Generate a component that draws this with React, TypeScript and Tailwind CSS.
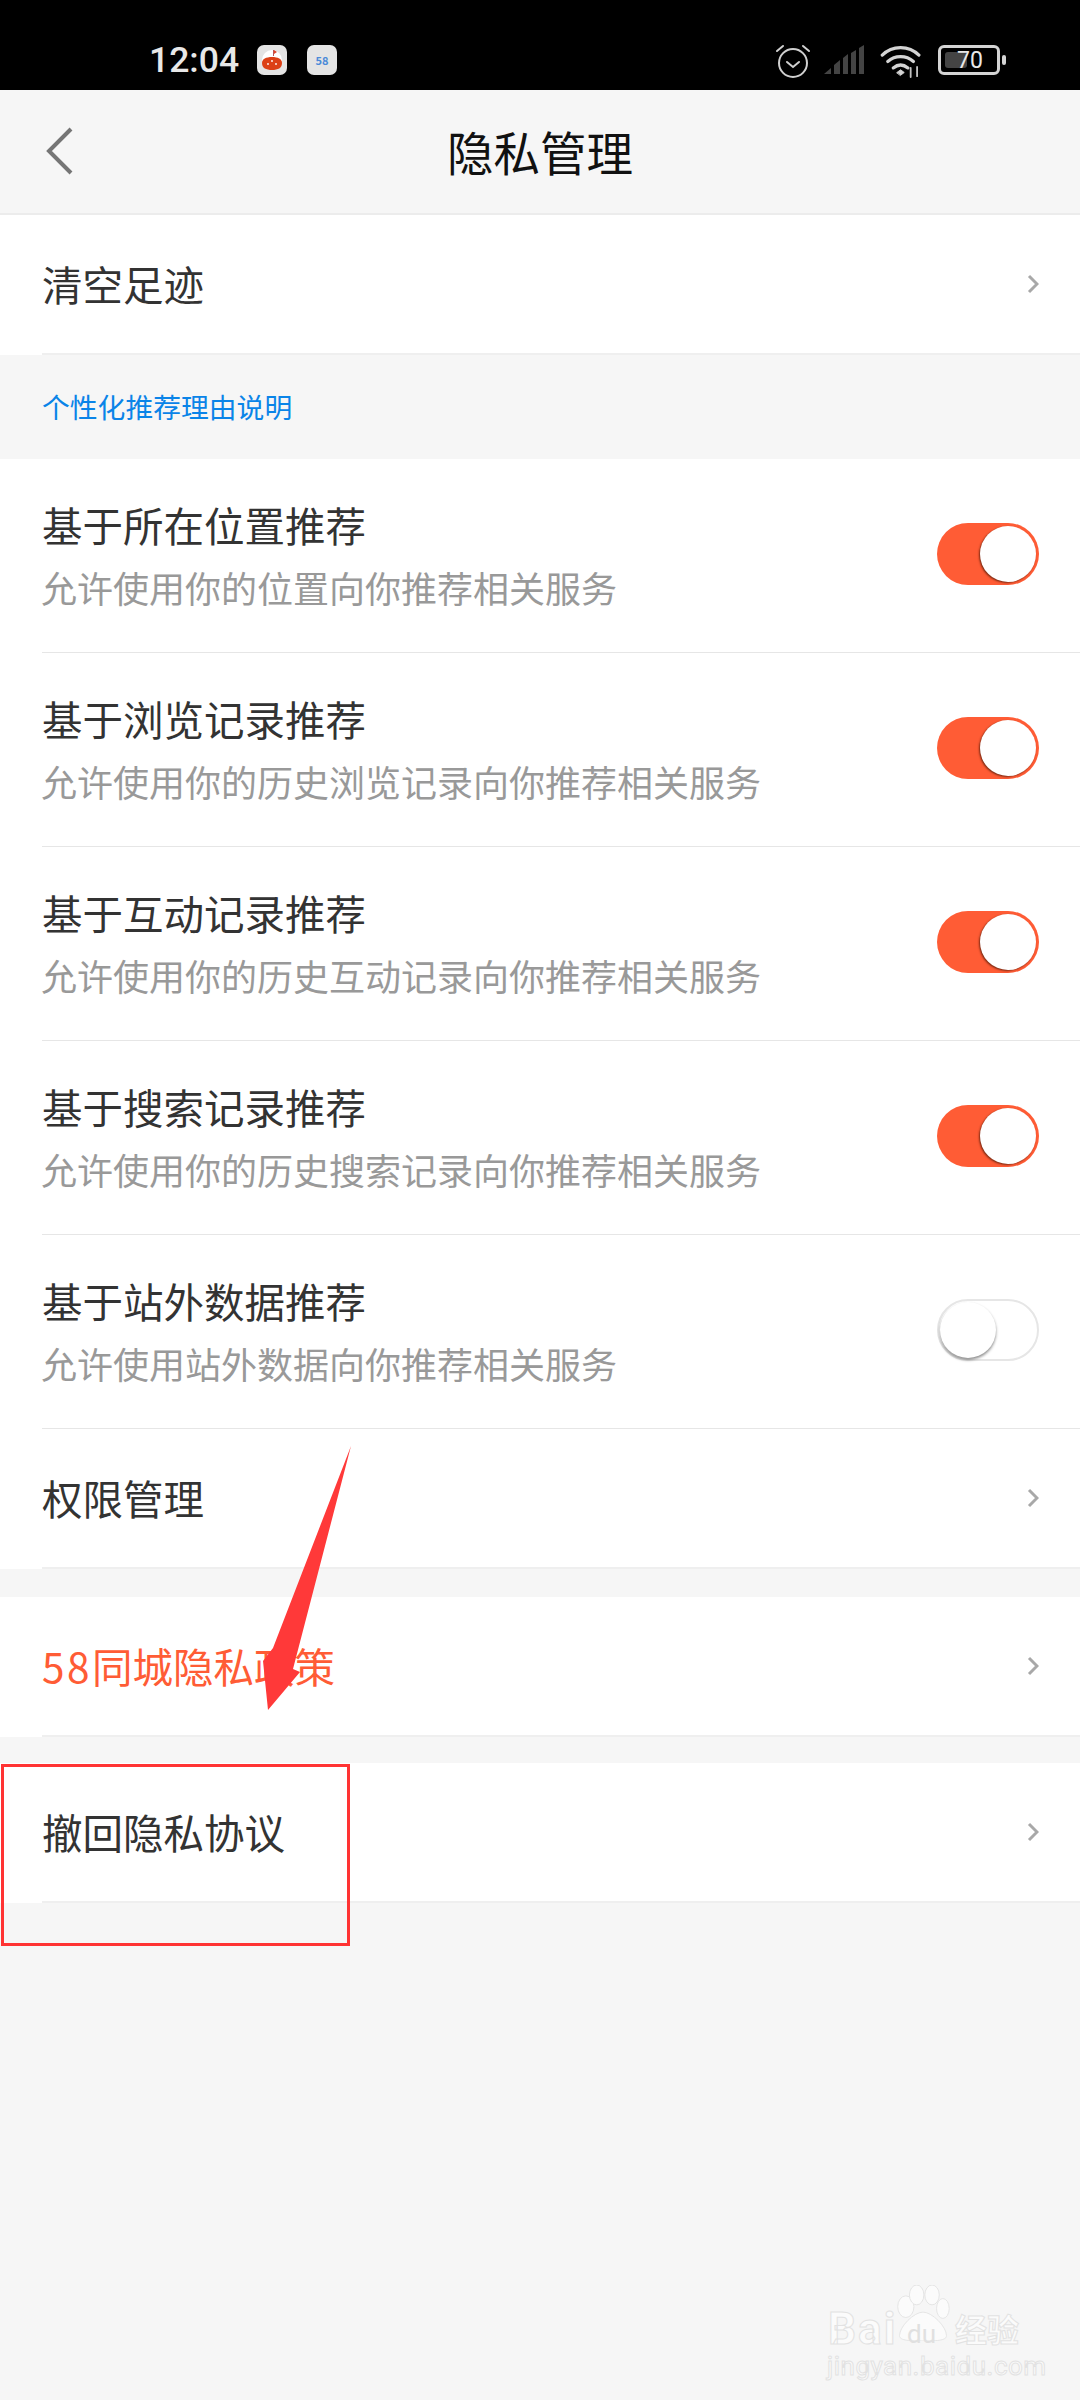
const FONT = { fontFamily: '"Noto Sans CJK SC", "Noto Sans", sans-serif' }

type ToggleRowProps = {
  title: string
  desc: string
  on?: boolean
}

const toggleRows: ToggleRowProps[] = [
  { title: "基于所在位置推荐", desc: "允许使用你的位置向你推荐相关服务", on: true },
  { title: "基于浏览记录推荐", desc: "允许使用你的历史浏览记录向你推荐相关服务", on: true },
  { title: "基于互动记录推荐", desc: "允许使用你的历史互动记录向你推荐相关服务", on: true },
  { title: "基于搜索记录推荐", desc: "允许使用你的历史搜索记录向你推荐相关服务", on: true },
  { title: "基于站外数据推荐", desc: "允许使用站外数据向你推荐相关服务" },
]

function StatusBar() {
  return (
    <div className="flex h-[90px] items-start justify-between bg-black pt-[45px] pl-[149px] pr-[74px]">
      <div className="flex items-center">
        <span
          className="w-[86px] text-[35.5px] leading-[30px] font-medium text-[#e8e8e8]"
          style={{ fontFamily: "Roboto, sans-serif" }}
        >
          12:04
        </span>
        <div className="ml-[22px] flex h-[30px] w-[30px] items-center justify-center rounded-[7px] bg-[#e4e4e4]">
          <svg width="20" height="22" viewBox="0 0 20 22">
            <circle cx="10" cy="11" r="10" fill="#fff" />
            <path d="M0 14c0-4 4-6 10-6s10 2 10 6c0 5-4 7-10 7S0 19 0 14z" fill="#dc4016" />
            <path d="M11 1h1v6h-1z" fill="#b55" />
            <path d="M12 1l3 2-3 2z" fill="#e0452a" />
            <circle cx="6" cy="15" r="0.9" fill="#fff" />
            <circle cx="14" cy="15" r="0.9" fill="#fff" />
            <circle cx="10" cy="12" r="0.9" fill="#fff" />
          </svg>
        </div>
        <div className="ml-[20px] flex h-[30px] w-[30px] items-center justify-center rounded-[7px] bg-[#e4e4e4] text-[11px] leading-none font-bold text-[#4a8ad8]">
          58
        </div>
      </div>
      <div className="flex items-start">
        <svg width="36" height="36" viewBox="0 0 36 36" fill="none" stroke="#d0d0d0" strokeWidth="2" strokeLinecap="round" className="mt-[-2px]">
          <circle cx="18" cy="20" r="14" />
          <path d="M12 19l6 5 6-5" />
          <path d="M2 8l6-5M34 8l-6-5" />
        </svg>
        <svg width="40" height="29" viewBox="0 0 40 29" fill="#444" className="ml-[13px]">
          <path d="M0 29l7-6v6z" />
          <path d="M10 20l6-5v14h-6z" />
          <path d="M19 13l5-4v20h-5z" />
          <path d="M27 8l5-3v24h-5z" />
          <path d="M35 3l5-3v29h-5z" />
        </svg>
        <svg width="43" height="33" viewBox="0 0 46 36" fill="none" stroke="#d4d4d4" strokeWidth="3.5" strokeLinecap="round" className="ml-[16px]">
          <path d="M2 11c11-11 29-11 40 0" />
          <path d="M8 18c8-7 20-7 28 0" />
          <path d="M14 25c5-4 11-4 16 0" />
          <path d="M18 30l4-3 4 3-4 3z" fill="#d4d4d4" strokeWidth="1" />
          <path d="M33 25v10M40 24v10" stroke="#c0c0c0" strokeWidth="2" />
        </svg>
        <div className="relative ml-[15px] flex h-[30px] w-[62px] items-center rounded-[6px] border-[3px] border-[#d4d4d4] p-[4px]">
          <div className="h-full w-[22px] rounded-[3px] bg-[#444]" />
          <span
            className="absolute inset-0 flex items-center justify-center pl-[2px] text-[23px] leading-none text-[#e8e8e8]"
            style={{ fontFamily: "Roboto, sans-serif" }}
          >
            70
          </span>
        </div>
        <div className="mt-[10px] ml-[2px] h-[10px] w-[4px] rounded-[2px] bg-[#d4d4d4]" />
      </div>
    </div>
  )
}

function NavBar() {
  return (
    <div className="relative flex h-[125px] items-center justify-center border-b-2 border-[#ececec] bg-[#f6f6f6]">
      <svg width="28" height="48" viewBox="0 0 28 48" fill="none" stroke="#757575" strokeWidth="4" className="absolute top-[37px] left-[46px]">
        <path d="M25 2L3 24l22 22" />
      </svg>
      <span className="mt-[-1px] text-[46.5px] leading-none text-[#111]">隐私管理</span>
    </div>
  )
}

function Chevron() {
  return (
    <svg width="12" height="20" viewBox="0 0 12 20" fill="none" stroke="#a8a8a8" strokeWidth="3">
      <path d="M2 2l8 8-8 8" />
    </svg>
  )
}

function LinkRow({ title, prefix, orange, height }: { title: string; prefix?: string; orange?: boolean; height: number }) {
  return (
    <div className="bg-white pl-[42px]" style={{ height }}>
      <div className="flex h-full items-center justify-between border-b-2 border-[#efefef] pr-[41px]">
        <span className={`text-[40.5px] leading-none ${orange ? "text-[#ff5c35]" : "text-[#333]"}`}>
          {prefix && <span className="tracking-[2.5px]">{prefix}</span>}
          {title}
        </span>
        <Chevron />
      </div>
    </div>
  )
}

function Toggle({ on }: { on?: boolean }) {
  return (
    <div
      className={`mb-[3px] flex h-[62px] w-[102px] items-center rounded-full ${
        on
          ? "justify-end bg-[#ff5c35] pr-[3px]"
          : "justify-start border-2 border-[#e6e6e6] bg-white pl-[1px]"
      }`}
    >
      <div
        className={`h-[56px] w-[56px] rounded-full bg-white ${
          on ? "shadow-[-1px_1px_2px_rgba(90,30,10,0.8)]" : "shadow-[0_2px_3px_rgba(0,0,0,0.45)]"
        }`}
      />
    </div>
  )
}

function ToggleRow({ title, desc, on }: ToggleRowProps) {
  return (
    <div className="h-[194px] bg-white pl-[42px]">
      <div className="flex h-full items-center justify-between border-b border-[#e6e6e6] pr-[41px]">
        <div className="flex flex-col pb-[3px]">
          <span className="text-[40.5px] leading-[50px] text-[#333]">{title}</span>
          <span className="mt-[15px] ml-[-1px] text-[36px] leading-[44px] text-[#999]">{desc}</span>
        </div>
        <Toggle on={on} />
      </div>
    </div>
  )
}

function Watermark() {
  return (
    <div className="absolute top-[2285px] left-[828px] h-[92px] w-[194px]">
      <svg width="56" height="56" viewBox="0 0 60 62" fill="#fbfbfb" stroke="#e2e2e2" strokeWidth="1" className="absolute top-0 left-[67px]">
        <ellipse cx="11" cy="24" rx="9" ry="12" />
        <ellipse cx="23" cy="11" rx="8" ry="11" />
        <ellipse cx="40" cy="11" rx="8" ry="11" />
        <ellipse cx="52" cy="26" rx="7" ry="11" />
        <path d="M30 30c10 0 26 16 26 26 0 5-8 6-26 6s-26-1-26-6c0-10 16-26 26-26z" />
      </svg>
      <span
        className="absolute top-[22px] left-0 text-[44px] leading-none font-bold tracking-[2px] text-[#fbfbfb]"
        style={{ fontFamily: "Roboto, sans-serif", WebkitTextStroke: "1px #e2e2e2" }}
      >
        Bai
      </span>
      <span
        className="absolute top-[36px] left-[79px] text-[26px] leading-none text-[#e0e0e0]"
        style={{ fontFamily: "Roboto, sans-serif" }}
      >
        du
      </span>
      <span
        className="absolute top-[27px] left-[127px] text-[32px] leading-none font-bold text-[#fbfbfb]"
        style={{ WebkitTextStroke: "1px #e2e2e2" }}
      >
        经验
      </span>
      <span
        className="absolute top-[68px] left-[-1px] text-[26px] leading-none tracking-[0.5px] text-[#fbfbfb]"
        style={{ fontFamily: "Roboto, sans-serif", WebkitTextStroke: "1px #e2e2e2" }}
      >
        jingyan.baidu.com
      </span>
    </div>
  )
}

export default function App() {
  return (
    <div className="relative h-[2400px] w-[1080px] overflow-hidden bg-[#f6f6f6]" style={FONT}>
      <StatusBar />
      <NavBar />
      <LinkRow title="清空足迹" height={140} />
      <div className="flex h-[104px] items-center pl-[42px] text-[27.8px] leading-none text-[#0a84e8]">
        个性化推荐理由说明
      </div>
      {toggleRows.map((row) => (
        <ToggleRow key={row.title} {...row} />
      ))}
      <LinkRow title="权限管理" height={140} />
      <div className="h-[28px]" />
      <LinkRow prefix="58" title="同城隐私政策" orange height={140} />
      <div className="h-[26px]" />
      <LinkRow title="撤回隐私协议" height={140} />

      {/* annotations sitting on top of the screenshot */}
      <svg width="1080" height="2400" viewBox="0 0 1080 2400" className="pointer-events-none absolute top-0 left-0" fill="none">
        <path d="M351 1446L273 1648L263 1661L268 1710L300 1672L293 1669Z" fill="#ff3939" />
        <rect x="2.5" y="1765.5" width="346" height="179" stroke="#ff3333" strokeWidth="3" />
      </svg>
      <Watermark />
    </div>
  )
}
